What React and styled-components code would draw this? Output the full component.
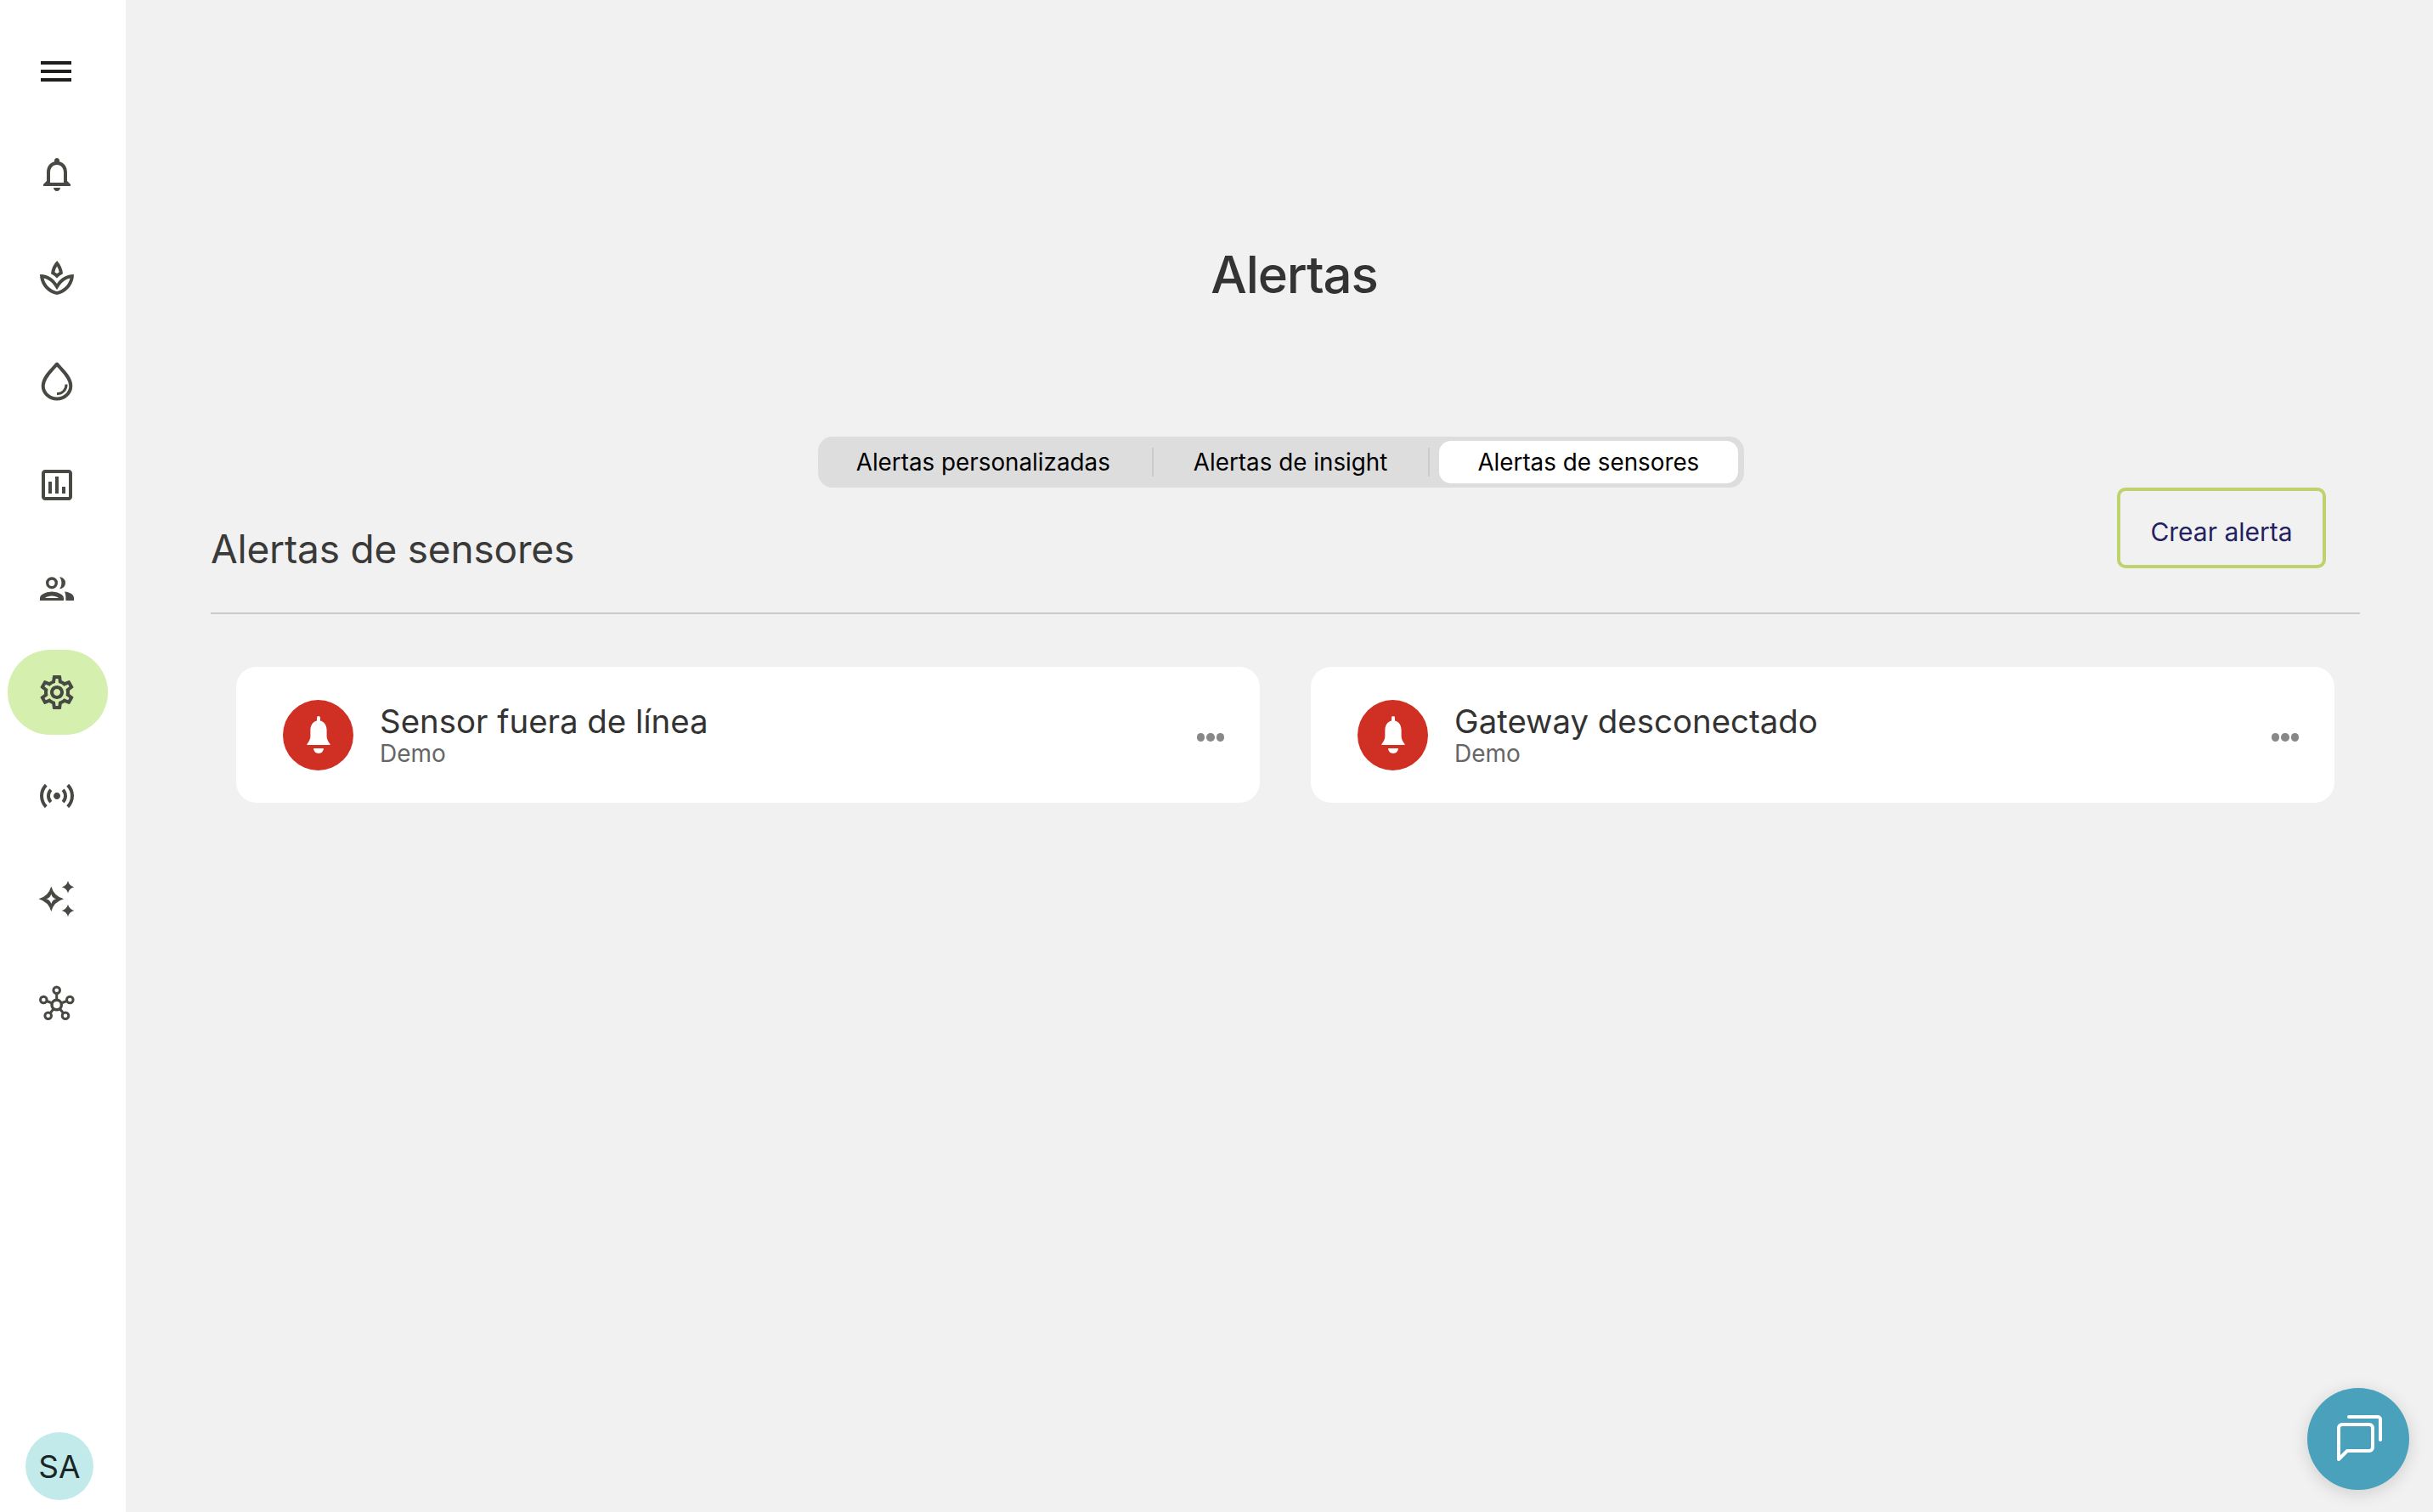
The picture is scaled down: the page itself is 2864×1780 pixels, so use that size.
import React from "react";
import styled, { createGlobalStyle } from "styled-components";
import {
  MdMenu,
  MdOutlineNotifications,
  MdOutlineSpa,
  MdOutlineAssessment,
  MdOutlineSettings,
  MdOutlineSensors,
} from "react-icons/md";

const Global = createGlobalStyle`
  html, body { margin: 0; padding: 0; background: #f1f1f1; }
  body { font-family: Inter, "Liberation Sans", sans-serif; }
  * { box-sizing: border-box; }
`;

const Page = styled.div`
  display: flex;
  width: 100%;
  height: 1780px;
  overflow: hidden;
  background: #f1f1f1;
`;

const Sidebar = styled.aside`
  width: 148px;
  flex: none;
  display: flex;
  flex-direction: column;
  padding: 34px 0 14px 9px;
  background: #ffffff;
`;

const NavList = styled.nav`
  display: flex;
  flex-direction: column;
  gap: 22px;
  margin-top: 21px;
`;

const NavItem = styled.div`
  width: 118px;
  height: 100px;
  flex: none;
  display: flex;
  align-items: center;
  justify-content: center;
  padding-right: ${(p) => (p.$dark ? "4px" : "2px")};
  border-radius: 50px;
  color: ${(p) => (p.$dark ? "#1e1e1c" : "#474a42")};
  background: ${(p) => (p.$active ? "#d4efae" : "transparent")};
`;

const Avatar = styled.div`
  width: 80px;
  height: 80px;
  margin: auto 0 0 21px;
  display: flex;
  align-items: center;
  justify-content: center;
  border-radius: 50%;
  background: #c3eaea;
  color: #182626;
  font-size: 37px;
  line-height: 1;
`;

const Main = styled.main`
  flex: 1;
  min-width: 0;
  padding-top: 287px;
  display: flex;
  flex-direction: column;
`;

const PageTitle = styled.h1`
  margin: 0;
  padding-left: 35px;
  text-align: center;
  font-size: 60px;
  line-height: 72px;
  font-weight: 500;
  letter-spacing: -1.1px;
  color: #333333;
`;

const Tabs = styled.div`
  align-self: center;
  display: flex;
  align-items: center;
  height: 60px;
  margin: 155px 0 0 4px;
  padding: 5px 7px 5px 5px;
  border-radius: 17px;
  background: #dddddd;
`;

const Tab = styled.div`
  height: 50px;
  display: flex;
  align-items: center;
  padding: ${(p) => (p.$active ? "0 46px 0 45px" : p.$first ? "0 49px 0 40px" : "0 48px 0 47px")};
  margin-left: ${(p) => (p.$active ? "11px" : "0")};
  border-radius: 14px;
  background: ${(p) => (p.$active ? "#ffffff" : "transparent")};
  color: #000000;
  font-size: 27.8px;
  white-space: nowrap;
`;

const TabDivider = styled.span`
  width: 2px;
  height: 34px;
  background: #cbcbcb;
`;

const Section = styled.section`
  padding: 0 86px 0 100px;
`;

const SectionHeader = styled.header`
  display: flex;
  justify-content: space-between;
  align-items: flex-start;
  padding: 0 40px 52px 0;
  border-bottom: 2px solid #cbcbcb;
`;

const SectionTitle = styled.h2`
  margin: 0;
  padding-top: 49px;
  font-size: 46px;
  line-height: 46px;
  font-weight: 420;
  letter-spacing: -0.2px;
  color: #3a3a3a;
`;

const CreateButton = styled.button`
  width: 246px;
  height: 95px;
  padding: 8px 0 0;
  border: 4px solid #bed36e;
  border-radius: 10px;
  background: transparent;
  color: #23215f;
  font: 400 30px Inter, sans-serif;
`;

const CardGrid = styled.div`
  display: grid;
  grid-template-columns: 1fr 1fr;
  gap: 60px;
  padding: 62px 30px 0;
`;

const Card = styled.article`
  height: 160px;
  display: flex;
  align-items: center;
  padding: 0 42px 0 55px;
  border-radius: 24px;
  background: #ffffff;
`;

const AlertBadge = styled.div`
  width: 83px;
  height: 83px;
  flex: none;
  display: flex;
  align-items: center;
  justify-content: center;
  border-radius: 50%;
  background: #d03024;
`;

const CardText = styled.div`
  flex: 1;
  margin: 0 0 0 31px;
`;

const CardTitle = styled.div`
  font-size: 38.4px;
  line-height: 44px;
  color: #333333;
`;

const CardSub = styled.div`
  font-size: 28px;
  line-height: 33px;
  color: #666666;
`;

const Dots = styled.div`
  display: flex;
  gap: 2px;
  margin-top: 6px;
`;

const Dot = styled.span`
  width: 9.5px;
  height: 9.5px;
  border-radius: 50%;
  background: #888888;
`;

const ChatButton = styled.button`
  position: fixed;
  right: 28px;
  bottom: 26px;
  width: 120px;
  height: 120px;
  padding: 0;
  border: 0;
  border-radius: 50%;
  background: #4aa1bb;
  box-shadow: 0 4px 20px rgba(0, 0, 0, 0.14);
  display: block;
`;

const Drop = () => (
  <svg width="48" height="48" viewBox="0 0 48 48" fill="none" stroke="currentColor">
    <path strokeWidth="4" strokeLinejoin="round" d="M24 3.5C20 9 7.7 18.5 7.7 29.3a16.3 15.2 0 0 0 32.6 0C40.3 18.5 28 9 24 3.5z" />
    <path strokeWidth="3" d="M24 38.5a10.5 10.5 0 0 0 11-11" />
  </svg>
);

const People = () => (
  <svg width="48" height="48" viewBox="0 0 48 48" fill="currentColor">
    <circle cx="18" cy="17.3" r="5.3" fill="none" stroke="currentColor" strokeWidth="3.4" />
    <path d="M27 10.3a7 7 0 1 1 0 14c1.6-2 2.4-4.4 2.4-7s-.8-5-2.4-7z" />
    <path
      fillRule="evenodd"
      d="M4 38v-3c0-4.8 9.3-7.5 14-7.5s14 2.7 14 7.5v3zM10 35h16c-1.4-1.2-5.4-2.4-8-2.4s-6.6 1.2-8 2.4z"
    />
    <path d="M33 27.5c5.5.6 11 3 11 7.5v3h-9.6v-3.5c0-2.6-.4-5.4-1.4-7z" />
  </svg>
);

const Sparkles = () => (
  <svg width="48" height="48" viewBox="0 0 48 48" fill="currentColor">
    <path
      fillRule="evenodd"
      d="M17.3 8.5Q20.5 20 32.1 23.3Q20.5 26.5 17.3 38.1Q14 26.5 2.5 23.3Q14 20 17.3 8.5zM17.3 17.5Q18.5 22 23 23.3Q18.5 24.5 17.3 29Q16 24.5 11.5 23.3Q16 22 17.3 17.5z"
    />
    <path d="M37 2Q38.5 7.8 44.3 9.3Q38.5 10.8 37 16.6Q35.5 10.8 29.7 9.3Q35.5 7.8 37 2z" />
    <path d="M37 29.7Q38.5 35.5 44.3 37Q38.5 38.5 37 44.3Q35.5 38.5 29.7 37Q35.5 35.5 37 29.7z" />
  </svg>
);

const Network = () => (
  <svg width="48" height="48" viewBox="0 0 48 48" fill="none" stroke="currentColor" strokeWidth="3">
    <circle cx="23.7" cy="26" r="5.7" strokeWidth="3.4" />
    <circle cx="23.7" cy="8.7" r="3.8" />
    <circle cx="8.3" cy="20" r="3.8" />
    <circle cx="39.3" cy="20" r="3.8" />
    <circle cx="13.7" cy="38.7" r="3.8" />
    <circle cx="34" cy="38.7" r="3.8" />
    <path d="M23.7 12.5v8M12 21.5l6.5 2.5M35.5 21.5L29 24M16 35.8l4.5-5.6M31.6 35.8l-4.5-5.6" />
  </svg>
);

const SolidBell = () => (
  <svg width="30" height="44" viewBox="0 0 30 44" fill="#ffffff">
    <path d="M15 0a2 2 0 0 1 2 2v3.6c5 1.3 7.6 5.6 7.6 10.9v7c0 3.7 1.6 6.4 4 9.5v1H1.4v-1c2.4-3.1 4-5.8 4-9.5v-7c0-5.3 2.6-9.6 7.6-10.9V2a2 2 0 0 1 2-2z" />
    <path d="M9 38h12a6 6 0 0 1-12 0z" />
  </svg>
);

const ChatIcon = () => (
  <svg width="120" height="120" viewBox="0 0 120 120" fill="none" stroke="#ffffff" strokeWidth="4" strokeLinecap="round" strokeLinejoin="round">
    <path d="M37 84V47a4 4 0 0 1 4-4h32a4 4 0 0 1 4 4v23a4 4 0 0 1-4 4H47z" />
    <path d="M49 34h34a3 3 0 0 1 3 3v24" />
  </svg>
);

const navItems = [
  { key: "bell", icon: <MdOutlineNotifications size={48} /> },
  { key: "spa", icon: <MdOutlineSpa size={48} /> },
  { key: "drop", icon: <Drop /> },
  { key: "chart", icon: <MdOutlineAssessment size={48} /> },
  { key: "people", icon: <People /> },
  { key: "settings", icon: <MdOutlineSettings size={48} />, active: true },
  { key: "sensors", icon: <MdOutlineSensors size={48} /> },
  { key: "sparkles", icon: <Sparkles /> },
  { key: "network", icon: <Network /> },
];

const alerts = [
  { title: "Sensor fuera de línea", sub: "Demo" },
  { title: "Gateway desconectado", sub: "Demo" },
];

export default function App() {
  return (
    <Page>
      <Global />
      <Sidebar>
        <NavItem $dark>
          <MdMenu size={48} />
        </NavItem>
        <NavList>
          {navItems.map((n) => (
            <NavItem key={n.key} $active={n.active}>
              {n.icon}
            </NavItem>
          ))}
        </NavList>
        <Avatar>SA</Avatar>
      </Sidebar>
      <Main>
        <PageTitle>Alertas</PageTitle>
        <Tabs>
          <Tab $first>Alertas personalizadas</Tab>
          <TabDivider />
          <Tab>Alertas de insight</Tab>
          <TabDivider />
          <Tab $active>Alertas de sensores</Tab>
        </Tabs>
        <Section>
          <SectionHeader>
            <SectionTitle>Alertas de sensores</SectionTitle>
            <CreateButton>Crear alerta</CreateButton>
          </SectionHeader>
          <CardGrid>
            {alerts.map((a) => (
              <Card key={a.title}>
                <AlertBadge>
                  <SolidBell />
                </AlertBadge>
                <CardText>
                  <CardTitle>{a.title}</CardTitle>
                  <CardSub>{a.sub}</CardSub>
                </CardText>
                <Dots>
                  <Dot />
                  <Dot />
                  <Dot />
                </Dots>
              </Card>
            ))}
          </CardGrid>
        </Section>
      </Main>
      <ChatButton aria-label="Chat">
        <ChatIcon />
      </ChatButton>
    </Page>
  );
}
